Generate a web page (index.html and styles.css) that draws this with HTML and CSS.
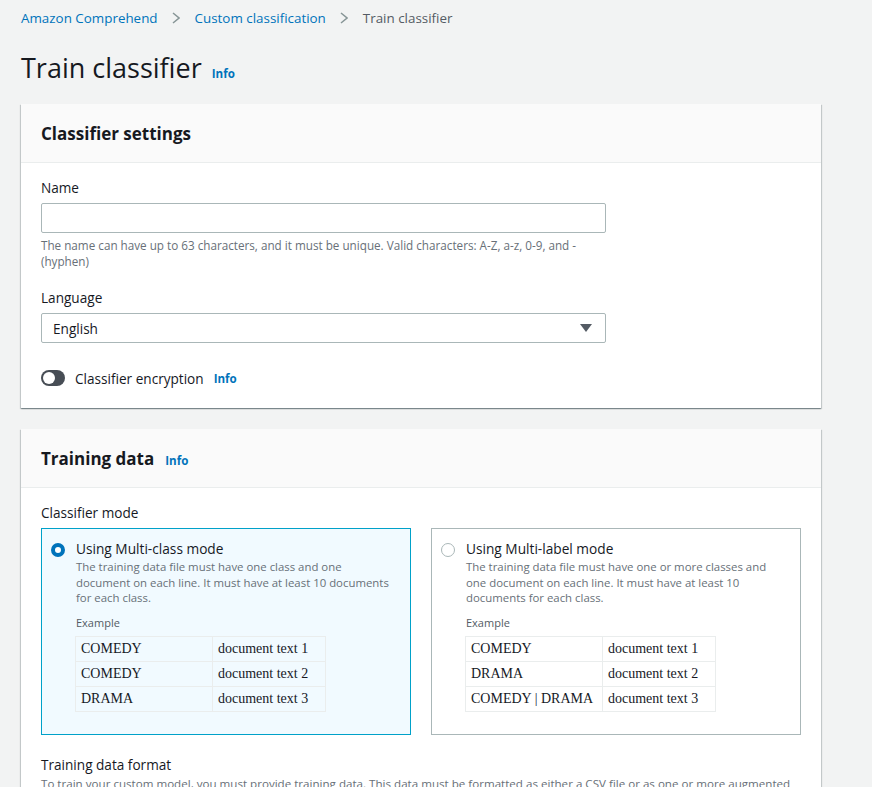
FILE: index.html
```html
<!DOCTYPE html>
<html lang="en">
<head>
    <meta charset="UTF-8">
    <meta name="viewport" content="width=device-width, initial-scale=1.0">
    <title>Train classifier</title>
    <link rel="stylesheet" href="styles.css">
</head>
<body>
    <div class="page">
        <nav class="breadcrumbs">
            <a href="#">Amazon Comprehend</a>
            <svg class="sep" width="8" height="12" viewBox="0 0 8 12"><path d="M1 1l6 5-6 5" fill="none" stroke="#879596" stroke-width="1.5"/></svg>
            <a href="#">Custom classification</a>
            <svg class="sep" width="8" height="12" viewBox="0 0 8 12"><path d="M1 1l6 5-6 5" fill="none" stroke="#879596" stroke-width="1.5"/></svg>
            <span class="current">Train classifier</span>
        </nav>

        <div class="page-title">
            <h1>Train classifier</h1>
            <a href="#" class="info">Info</a>
        </div>

        <section class="card">
            <div class="card-header">
                <h2>Classifier settings</h2>
            </div>
            <div class="card-body">
                <div class="field">
                    <label>Name</label>
                    <input type="text" class="text-input">
                    <p class="hint">The name can have up to 63 characters, and it must be unique. Valid characters: A-Z, a-z, 0-9, and - (hyphen)</p>
                </div>
                <div class="field">
                    <label>Language</label>
                    <div class="select">
                        <span>English</span>
                        <svg width="12" height="8" viewBox="0 0 12 8"><path d="M0 0h12L6 8z" fill="#545b64"/></svg>
                    </div>
                </div>
                <div class="toggle-row">
                    <span class="toggle"><span class="knob"></span></span>
                    <span class="toggle-label">Classifier encryption</span>
                    <a href="#" class="info">Info</a>
                </div>
            </div>
        </section>

        <section class="card">
            <div class="card-header">
                <h2>Training data</h2>
                <a href="#" class="info">Info</a>
            </div>
            <div class="card-body">
                <label>Classifier mode</label>
                <div class="tiles">
                    <div class="tile selected">
                        <span class="radio"></span>
                        <div class="tile-content">
                            <div class="tile-title">Using Multi-class mode</div>
                            <p class="tile-desc">The training data file must have one class and one<br>document on each line. It must have at least 10 documents<br>for each class.</p>
                            <div class="example">Example</div>
                            <table>
                                <tr><td>COMEDY</td><td>document text 1</td></tr>
                                <tr><td>COMEDY</td><td>document text 2</td></tr>
                                <tr><td>DRAMA</td><td>document text 3</td></tr>
                            </table>
                        </div>
                    </div>
                    <div class="tile">
                        <span class="radio"></span>
                        <div class="tile-content">
                            <div class="tile-title">Using Multi-label mode</div>
                            <p class="tile-desc">The training data file must have one or more classes and<br>one document on each line. It must have at least 10<br>documents for each class.</p>
                            <div class="example">Example</div>
                            <table>
                                <tr><td>COMEDY</td><td>document text 1</td></tr>
                                <tr><td>DRAMA</td><td>document text 2</td></tr>
                                <tr><td>COMEDY | DRAMA</td><td>document text 3</td></tr>
                            </table>
                        </div>
                    </div>
                </div>
                <div class="format">
                    <label>Training data format</label>
                    <p class="hint">To train your custom model, you must provide training data. This data must be formatted as either a CSV file or as one or more augmented manifest files.</p>
                </div>
            </div>
        </section>
    </div>
</body>
</html>
```

FILE: styles.css
```css
body {
    font-family: "Open Sans", Arial, sans-serif;
    background-color: #f2f3f3;
    color: #16191f;
    margin: 0;
    font-size: 13.6px;
}
a {
    text-decoration: none;
    color: #0073bb;
}
.page {
    padding: 8px 51px 0 21px;
}
.breadcrumbs {
    display: flex;
    align-items: center;
    height: 20px;
    font-size: 13.4px;
}
.breadcrumbs .sep {
    margin: 0 15px 0 14px;
}
.breadcrumbs .current {
    color: #545b64;
}
.page-title {
    display: flex;
    align-items: baseline;
    margin-top: 22px;
    height: 54px;
}
h1 {
    font-size: 27px;
    font-weight: 400;
    margin: 0;
    line-height: 36px;
}
.info {
    font-size: 11.6px;
    font-weight: 700;
    margin-left: 10px;
}
.card {
    background: #fff;
    box-shadow: 0 1px 1px 0 rgba(0, 28, 36, 0.3), 1px 1px 1px 0 rgba(0, 28, 36, 0.15), -1px 1px 1px 0 rgba(0, 28, 36, 0.15);
    margin-bottom: 21px;
}
.card-header {
    background: #fafafa;
    border-bottom: 1px solid #eaeded;
    height: 58px;
    padding: 0 20px;
    display: flex;
    align-items: center;
}
h2 {
    font-size: 17px;
    font-weight: 700;
    margin: 0;
}
.card-header .info {
    margin-left: 11px;
    margin-top: 4px;
}
.card-body {
    padding: 14px 20px 18px;
}
label {
    display: block;
    line-height: 22px;
    margin-bottom: 4px;
}
.field {
    margin-bottom: 18px;
    width: 565px;
}
.text-input {
    display: block;
    box-sizing: border-box;
    width: 565px;
    height: 30px;
    border: 1px solid #aab7b8;
    border-radius: 2px;
    margin: 0;
}
.hint {
    font-size: 11.7px;
    line-height: 16px;
    color: #687078;
    margin: 4px 0 0;
}
.select {
    box-sizing: border-box;
    width: 565px;
    height: 30px;
    border: 1px solid #aab7b8;
    border-radius: 2px;
    display: flex;
    align-items: center;
    justify-content: space-between;
    padding: 0 13px 0 11px;
}
.toggle-row {
    display: flex;
    align-items: center;
    margin-top: 23px;
    height: 24px;
}
.toggle {
    width: 24px;
    height: 16px;
    border-radius: 8px;
    background: #474d55;
    position: relative;
    margin-right: 10px;
}
.knob {
    position: absolute;
    left: 2px;
    top: 2px;
    width: 12px;
    height: 12px;
    border-radius: 50%;
    background: #fff;
}
.toggle-row .info {
    margin-left: 10px;
}
.tiles {
    display: grid;
    grid-template-columns: 370px 370px;
    gap: 20px;
}
.tile {
    border: 1px solid #aab7b8;
    height: 207px;
    box-sizing: border-box;
    display: flex;
    padding: 11px 9px;
}
.tile.selected {
    background: #f1faff;
    border-color: #00a1c9;
}
.radio {
    box-sizing: border-box;
    width: 14px;
    height: 14px;
    border-radius: 50%;
    border: 1px solid #aab7b8;
    background: #fff;
    margin: 3px 11px 0 0;
    flex-shrink: 0;
}
.selected .radio {
    border: 4px solid #0073bb;
}
.tile-title {
    font-size: 13.7px;
    line-height: 18px;
}
.tile-desc {
    font-size: 11.4px;
    line-height: 15.5px;
    color: #687078;
    margin: 1px 0 0;
    white-space: nowrap;
}
.example {
    font-size: 11px;
    color: #545b64;
    margin-top: 10px;
    line-height: 14px;
}
table {
    border-collapse: collapse;
    margin-top: 6px;
    margin-left: -1px;
    font-family: "Liberation Serif", "Times New Roman", serif;
    font-size: 14px;
}
td {
    border: 1px solid #eaeded;
    height: 25px;
    padding: 0 5px;
    box-sizing: border-box;
}
td:first-child {
    width: 137px;
}
td:last-child {
    width: 113px;
}
.format {
    margin-top: 19px;
    width: 760px;
}
.format label {
    margin-bottom: 0;
}
.format .hint {
    margin-top: 0;
    font-size: 11.6px;
}
```
